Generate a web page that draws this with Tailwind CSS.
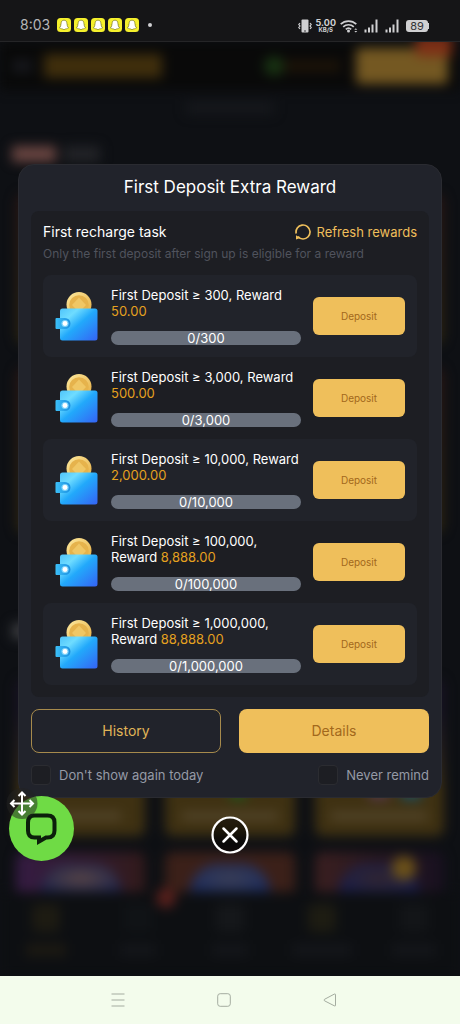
<!DOCTYPE html>
<html lang="en">
<head>
    <meta charset="UTF-8">
    <meta name="viewport" content="width=device-width, initial-scale=1.0">
    <script src="https://cdn.jsdelivr.net/npm/@tailwindcss/browser@4"></script>
    <title>First Deposit Extra Reward</title>
</head>
<body class="min-h-screen flex flex-col bg-[#0e0f12] font-['Inter',sans-serif] text-white">
    <!-- shared icons -->
    <svg class="absolute size-0" aria-hidden="true">
        <defs>
            <linearGradient id="walletFill" x1="0" y1="0" x2="1" y2="1">
                <stop offset="0" stop-color="#4fc4fb"/>
                <stop offset="0.25" stop-color="#6fdcff"/>
                <stop offset="0.5" stop-color="#22a9fb"/>
                <stop offset="1" stop-color="#3563f4"/>
            </linearGradient>
            <linearGradient id="claspFill" x1="0" y1="0" x2="1" y2="0">
                <stop offset="0" stop-color="#3cc0f8"/>
                <stop offset="1" stop-color="#1b8fe0"/>
            </linearGradient>
            <linearGradient id="coinFill" x1="0" y1="0" x2="1" y2="1">
                <stop offset="0" stop-color="#fdeaa0"/>
                <stop offset="1" stop-color="#e5ab3f"/>
            </linearGradient>
        </defs>
        <symbol id="wallet" viewBox="0 0 44 52">
            <circle cx="24" cy="14.500" r="12.500" fill="url(#coinFill)"/>
            <circle cx="24" cy="15" r="9.800" fill="#e6b34c"/>
            <path d="M24 7.500l7 7.500-7 7.500-7-7.500z" fill="#f0c765"/>
            <rect x="5" y="18.500" width="37.500" height="32" rx="2.500" fill="url(#walletFill)"/>
            <path d="M1.500 28H10a5.500 5.500 0 0 1 0 11H1.500a1 1 0 0 1-1-1v-9a1 1 0 0 1 1-1z" fill="url(#claspFill)"/>
            <circle cx="10" cy="33.500" r="3.600" fill="#7fd4fb"/>
            <circle cx="10" cy="33.500" r="2.400" fill="#fff"/>
        </symbol>
        <symbol id="ghost" viewBox="0 0 14 14">
            <rect width="14" height="14" rx="3.500" fill="#f5f02c"/>
            <path d="M7 2.200c1.900 0 2.900 1.300 2.900 3v1.300l.9.300-.7 1c.3.900.9 1.400 1.700 1.700-.3.600-.9.800-1.500.9-.3.500-1 .3-1.500.4-.5.500-1.100.8-1.800.8s-1.300-.3-1.800-.8c-.5-.1-1.200.1-1.500-.4-.6-.1-1.200-.3-1.500-.9.800-.3 1.400-.8 1.700-1.700l-.7-1 .9-.3V5.200c0-1.700 1-3 2.900-3z" fill="#fff" stroke="#6b6912" stroke-width=".6"/>
        </symbol>
        <symbol id="signal" viewBox="0 0 15 14">
            <path d="M1.500 13.500v-3M5 13.500V8.500M8.500 13.500V5.500M12.500 13.500V.5" stroke="#d0d0d2" stroke-width="2" fill="none"/>
        </symbol>
    </svg>

    <header class="h-[42px] shrink-0 flex items-end justify-between pl-5 pr-[31px] pb-2 bg-[#151517] border-b border-[#252527]">
        <div class="flex items-center gap-[3px]">
            <span class="text-sm leading-4 text-[#b5b5b7] mr-1">8:03</span>
            <svg class="size-3.5"><use href="#ghost"/></svg>
            <svg class="size-3.5"><use href="#ghost"/></svg>
            <svg class="size-3.5"><use href="#ghost"/></svg>
            <svg class="size-3.5"><use href="#ghost"/></svg>
            <svg class="size-3.5"><use href="#ghost"/></svg>
            <span class="size-1 rounded-full bg-[#d0d0d2] ml-1.5"></span>
        </div>
        <div class="flex items-center gap-1.5">
            <svg class="size-3.5" viewBox="0 0 14 14" fill="none" stroke="#d0d0d2" stroke-width="1.200">
                <rect x="3.500" y=".5" width="7" height="13" rx="1" fill="#d0d0d2" stroke="none"/>
                <path d="M2 4L.8 5.500 2 7 .8 8.500 2 10M12 4l1.200 1.500L12 7l1.200 1.500L12 10"/>
                <path d="M6 12h2" stroke="#151517" stroke-width=".8"/>
            </svg>
            <div class="text-center font-bold text-[#d0d0d2] -ml-0.5 -mr-0.5">
                <p class="text-[9px] leading-[9px]">5.00</p>
                <p class="text-[6px] leading-[6px]">KB/S</p>
            </div>
            <svg class="w-[18px] h-3.5" viewBox="0 0 18 14" fill="none" stroke="#d0d0d2" stroke-width="1.700">
                <path d="M.7 5.200a11.200 11.200 0 0 1 15.600 0M3.200 7.900a7.600 7.600 0 0 1 10.600 0M5.800 10.300a4 4 0 0 1 5.400 0"/>
                <circle cx="8.500" cy="12" r="1.500" fill="#d0d0d2" stroke="none"/>
                <path d="M14.300 10.800l1.500-1.500 1.500 1.500zM14.300 12l1.500 1.500 1.500-1.500z" fill="#d0d0d2" stroke="none"/>
            </svg>
            <svg class="w-[15px] h-3.5"><use href="#signal"/></svg>
            <svg class="w-[15px] h-3.5"><use href="#signal"/></svg>
            <div class="flex items-center">
                <span class="w-[22px] text-center rounded-[3px] bg-[#d0d0d2] text-[11px] leading-3 text-[#333335]">89</span>
                <span class="w-px h-1.5 bg-[#d0d0d2]"></span>
            </div>
        </div>
    </header>

    <div class="relative flex-1 flex flex-col overflow-hidden bg-[#0e1014]">
        <!-- page behind the dialog -->
        <div class="absolute inset-0 flex flex-col blur-[6px]" aria-hidden="true">
            <div class="h-12 shrink-0 flex items-center px-3 bg-[#090909]">
                <span class="w-5 h-3 bg-[#17181d]"></span>
                <span class="ml-3 w-[118px] h-6 bg-[#3f2e0c]"></span>
                <span class="ml-auto size-5 rounded-full bg-[#183312]"></span>
                <span class="w-14 h-3 bg-[#1c1308]"></span>
                <span class="relative ml-4 w-[92px] h-9 rounded bg-[#745822]">
                    <span class="absolute -top-3 -right-1 w-9 h-5 bg-[#7d2f16]"></span>
                </span>
            </div>
            <div class="mx-auto mt-3 w-22 h-3 bg-[#16181c]"></div>
            <div class="mt-8 ml-3 flex items-center gap-2">
                <span class="w-11 h-4 bg-[#694541]"></span>
                <span class="w-9 h-4 bg-[#222327]"></span>
            </div>
            <div class="mt-8 mx-4 h-[150px] shrink-0 rounded-lg bg-linear-to-b from-[#281614] to-[#2b2410]"></div>
            <div class="mt-6 mx-4 h-[165px] shrink-0 rounded-lg bg-linear-to-b from-[#281614] to-[#2b2410]"></div>
            <div class="mt-[90px] ml-3 w-20 h-4 shrink-0 bg-[#3a3b3f]"></div>
            <div class="mt-10 mx-4 flex-1 grid grid-cols-3 gap-5">
                <div class="flex flex-col justify-end items-center pb-4 rounded-lg bg-linear-to-b from-[#181324] from-20% to-[#3f3112] to-70%"><span class="w-20 h-2 bg-[#53462b]"></span></div>
                <div class="flex flex-col justify-end items-center gap-3 pb-4 rounded-lg bg-linear-to-b from-[#181324] from-20% to-[#3f3112] to-70%"><span class="ml-4 size-4 bg-[#24501b]"></span><span class="w-24 h-2 bg-[#53462b]"></span></div>
                <div class="flex flex-col justify-end items-center gap-3 pb-4 rounded-lg bg-linear-to-b from-[#181324] from-20% to-[#3f3112] to-70%"><span class="ml-8 flex gap-3"><span class="size-5 bg-[#553847]"></span><span class="size-5 bg-[#1e4d5c]"></span></span><span class="w-24 h-2 bg-[#53462b]"></span></div>
            </div>
            <div class="relative mt-4 mx-4 h-10 shrink-0 grid grid-cols-3 gap-5">
                <div class="flex justify-center items-end rounded-t-lg bg-linear-to-r from-[#351b43] to-[#321a1b]"><span class="w-20 h-7 rounded-t-full bg-radial from-[#5b4543] to-[#141b4a]"></span></div>
                <div class="flex justify-center items-end rounded-t-lg bg-[#3b2019]"><span class="w-20 h-7 rounded-t-full bg-radial from-[#3d3f54] to-[#14245c]"></span></div>
                <div class="flex justify-center items-end rounded-t-lg bg-linear-to-r from-[#3a1f20] to-[#181020]"><span class="w-20 h-7 rounded-t-full bg-radial from-[#33252c] to-[#14184f]"></span></div>
                <span class="absolute top-1 right-7 size-6 rounded-full bg-[#6b5119]"></span>
            </div>
            <div class="h-[84px] shrink-0 grid grid-cols-5 bg-[#0d0f12] pt-3">
                <div class="flex flex-col items-center gap-3"><span class="size-7 rounded bg-[#1d1b12]"></span><span class="w-10 h-3 bg-[#1d1a12]"></span></div>
                <div class="relative flex flex-col items-center gap-3"><span class="size-7 rounded bg-[#101316]"></span><span class="w-9 h-3 bg-[#14161a]"></span><span class="absolute -top-4 right-2 size-5 rounded-full bg-[#58201c]"></span></div>
                <div class="flex flex-col items-center gap-3"><span class="size-7 rounded bg-[#15171a]"></span><span class="w-9 h-3 bg-[#14161a]"></span></div>
                <div class="flex flex-col items-center gap-3"><span class="size-7 rounded bg-[#1d1c12]"></span><span class="w-15 h-3 bg-[#14161a]"></span></div>
                <div class="flex flex-col items-center gap-3"><span class="size-7 rounded bg-[#131518]"></span><span class="w-11 h-3 bg-[#14161a]"></span></div>
            </div>
        </div>

        <!-- dialog -->
        <main class="relative mt-[122px] mx-[18px] rounded-2xl border border-[#2a2b31] bg-[#21232b] p-3">
            <h1 class="text-center text-[17px] leading-5">First Deposit Extra Reward</h1>
            <section class="mt-3.5 rounded-lg bg-[#1d1e23] p-3">
                <div class="flex items-center justify-between leading-[18px]">
                    <h2 class="text-sm leading-[18px]">First recharge task</h2>
                    <button type="button" class="flex items-center gap-1.5 text-[13px] leading-[18px] text-[#efbf5b]">
                        <svg class="size-4" viewBox="0 0 16 16" fill="none" stroke="currentColor" stroke-width="1.700">
                            <path d="M1.200 9.500A7 7 0 1 1 8 15Q5 15 3 12.500"/>
                            <path d="M1 11.200v4.300l4.300-1.500z" fill="currentColor" stroke="none"/>
                        </svg>
                        Refresh rewards
                    </button>
                </div>
                <p class="mt-1 text-xs leading-[18px] text-[#50535d]">Only the first deposit after sign up is eligible for a reward</p>
                <ul class="mt-3">
                    <li class="flex items-center rounded-lg bg-[#21232a] p-3">
                        <svg class="w-11 h-13 shrink-0"><use href="#wallet"/></svg>
                        <div class="flex-1 mx-3">
                            <p class="text-[13px] leading-4">First Deposit ≥ 300, Reward <span class="text-[#e5a11f]">50.00</span></p>
                            <p class="mt-3 rounded-full bg-[#69707c] text-center text-[13px] leading-[14px]">0/300</p>
                        </div>
                        <button type="button" class="w-[92px] h-[38px] shrink-0 rounded-md bg-[#efbf5b] text-[10px] text-[#a2681c]">Deposit</button>
                    </li>
                    <li class="flex items-center rounded-lg p-3">
                        <svg class="w-11 h-13 shrink-0"><use href="#wallet"/></svg>
                        <div class="flex-1 mx-3">
                            <p class="text-[13px] leading-4">First Deposit ≥ 3,000, Reward <span class="text-[#e5a11f]">500.00</span></p>
                            <p class="mt-3 rounded-full bg-[#69707c] text-center text-[13px] leading-[14px]">0/3,000</p>
                        </div>
                        <button type="button" class="w-[92px] h-[38px] shrink-0 rounded-md bg-[#efbf5b] text-[10px] text-[#a2681c]">Deposit</button>
                    </li>
                    <li class="flex items-center rounded-lg bg-[#21232a] p-3">
                        <svg class="w-11 h-13 shrink-0"><use href="#wallet"/></svg>
                        <div class="flex-1 mx-3">
                            <p class="text-[13px] leading-4">First Deposit ≥ 10,000, Reward <span class="text-[#e5a11f]">2,000.00</span></p>
                            <p class="mt-3 rounded-full bg-[#69707c] text-center text-[13px] leading-[14px]">0/10,000</p>
                        </div>
                        <button type="button" class="w-[92px] h-[38px] shrink-0 rounded-md bg-[#efbf5b] text-[10px] text-[#a2681c]">Deposit</button>
                    </li>
                    <li class="flex items-center rounded-lg p-3">
                        <svg class="w-11 h-13 shrink-0"><use href="#wallet"/></svg>
                        <div class="flex-1 mx-3">
                            <p class="text-[13px] leading-4">First Deposit ≥ 100,000, Reward <span class="text-[#e5a11f]">8,888.00</span></p>
                            <p class="mt-3 rounded-full bg-[#69707c] text-center text-[13px] leading-[14px]">0/100,000</p>
                        </div>
                        <button type="button" class="w-[92px] h-[38px] shrink-0 rounded-md bg-[#efbf5b] text-[10px] text-[#a2681c]">Deposit</button>
                    </li>
                    <li class="flex items-center rounded-lg bg-[#21232a] p-3">
                        <svg class="w-11 h-13 shrink-0"><use href="#wallet"/></svg>
                        <div class="flex-1 mx-3">
                            <p class="text-[13px] leading-4">First Deposit ≥ 1,000,000, Reward <span class="text-[#e5a11f]">88,888.00</span></p>
                            <p class="mt-3 rounded-full bg-[#69707c] text-center text-[13px] leading-[14px]">0/1,000,000</p>
                        </div>
                        <button type="button" class="w-[92px] h-[38px] shrink-0 rounded-md bg-[#efbf5b] text-[10px] text-[#a2681c]">Deposit</button>
                    </li>
                </ul>
            </section>
            <div class="mt-3 grid grid-cols-2 gap-[18px] text-sm">
                <button type="button" class="h-11 rounded-lg border border-[#a68a4c] text-[#e0b457]">History</button>
                <button type="button" class="h-11 rounded-lg bg-[#efbf5b] text-[#a2681c]">Details</button>
            </div>
            <div class="mt-3 flex justify-between text-[13px] leading-5 text-[#959aa6]">
                <label class="flex items-center gap-2"><input type="checkbox" class="appearance-none size-5 rounded-sm border border-[#2b2c31] bg-[#1d1e23]">Don't show again today</label>
                <label class="flex items-center gap-2"><input type="checkbox" class="appearance-none size-5 rounded-sm border border-[#2b2c31] bg-[#1d1e23]">Never remind</label>
            </div>
        </main>
        <button type="button" aria-label="Close" class="relative mt-[18px] mx-auto">
            <svg class="size-[38px]" viewBox="0 0 38 38" fill="none" stroke="#fff" stroke-linecap="round">
                <circle cx="19" cy="19" r="17.500" fill="#000" fill-opacity=".5" stroke-width="2.200"/>
                <path d="M12.500 12.500l13 13M25.500 12.500l-13 13" stroke-width="2.500"/>
            </svg>
        </button>
        <!-- draggable chat bubble -->
        <button type="button" aria-label="Chat" class="absolute left-2 bottom-[114px] size-[67px]">
            <svg class="size-full overflow-visible" viewBox="0 0 67 67" fill="none">
                <circle cx="33.500" cy="33.500" r="32.500" fill="#6fdb45"/>
                <path d="M26.500 20.500H39.500Q46.500 20.500 46.500 27.500V35.500Q46.500 42.500 39.500 42.500H38L31 46.500V42.500H26.500Q20 42.500 20 35.500V27.500Q20 20.500 26.500 20.500Z" stroke="#0c1f0b" stroke-width="4"/>
                <circle cx="14" cy="8.500" r="15.500" fill="#222" fill-opacity=".5"/>
                <path d="M14-2v21M3.500 8.500h21M10.500 1L14-2.500 17.500 1M10.500 16l3.500 3.500 3.500-3.500M6.500 5L3 8.500 6.500 12M21.500 5L25 8.500 21.500 12" stroke="#fff" stroke-width="2"/>
            </svg>
        </button>
    </div>

    <nav class="h-12 shrink-0 flex items-center justify-center gap-[92px] pr-3 bg-[#f3fcec] text-[#a4aca0]">
        <button type="button" aria-label="Recent apps"><svg class="size-3.5" viewBox="0 0 14 14" fill="none" stroke="currentColor"><path d="M.5 1h13M.5 7h13M.5 13h13"/></svg></button>
        <button type="button" aria-label="Home"><svg class="size-3.5" viewBox="0 0 14 14" fill="none" stroke="currentColor"><rect x=".7" y=".7" width="12.600" height="12.600" rx="2.500"/></svg></button>
        <button type="button" aria-label="Back"><svg class="size-3.5" viewBox="0 0 14 14" fill="none" stroke="currentColor"><path d="M12.500 1.800v10.400q0 1.300-1.200.6L1.500 7.800q-1-.8 0-1.500l9.800-5.200q1.200-.6 1.200.7z"/></svg></button>
    </nav>
</body>
</html>
